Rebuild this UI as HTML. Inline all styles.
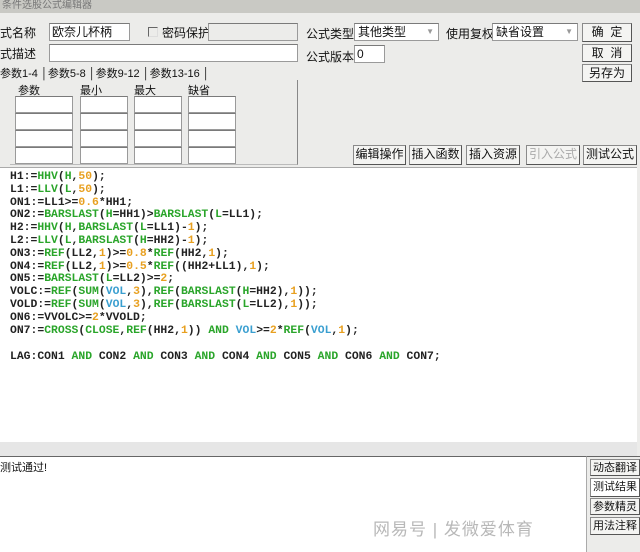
<!DOCTYPE html>
<html><head><meta charset="utf-8"><style>
*{margin:0;padding:0;box-sizing:border-box}
body{width:640px;height:552px;overflow:hidden;background:#ececea;font-family:"Liberation Sans","Noto Sans CJK SC",sans-serif;font-size:12px;color:#111;position:relative}
.a{position:absolute;white-space:nowrap}
.in{position:absolute;background:#fff;border:1px solid #9a9a9a;border-top-color:#7a7a7a}
.btn{position:absolute;background:#f4f4f2;border:1px solid #8a8a8a;border-right-color:#555;border-bottom-color:#555;text-align:center;font-size:12px;line-height:17px}
.code{position:absolute;left:10px;top:171px;font-family:"Liberation Mono",monospace;font-weight:bold;font-size:11.4px;color:#222;white-space:pre}
.code div{height:12.8px;line-height:12.8px}
.g{color:#2aa52a}.o{color:#e8a020}.b{color:#3a9fd0}
</style></head><body>
<div class="a" style="left:0;top:0;width:640px;height:13px;background:#c9c9c4"></div>
<div class="a" style="left:2px;top:0;font-size:10px;color:#777;line-height:11px">条件选股公式编辑器</div>

<div class="a" style="left:0;top:24px">式名称</div>
<div class="in" style="left:49px;top:23px;width:81px;height:18px;padding-left:2px;line-height:16px">欧奈儿杯柄</div>
<div class="a" style="left:148px;top:27px;width:10px;height:10px;border:1px solid #666;border-right-color:#ddd;border-bottom-color:#ddd"></div>
<div class="a" style="left:162px;top:24px">密码保护</div>
<div class="in" style="left:208px;top:23px;width:90px;height:18px;background:#ececea"></div>
<div class="a" style="left:0;top:45px">式描述</div>
<div class="in" style="left:49px;top:44px;width:249px;height:18px"></div>

<div class="a" style="left:0;top:65px;font-size:11px">参数1-4 │参数5-8 │参数9-12 │参数13-16 │</div>
<div class="a" style="left:10px;top:80px;width:288px;height:85px;border-right:1px solid #888;border-bottom:1px solid #bbb"></div>
<div class="a" style="left:18px;top:82px;font-size:11px">参数</div>
<div class="a" style="left:80px;top:82px;font-size:11px">最小</div>
<div class="a" style="left:134px;top:82px;font-size:11px">最大</div>
<div class="a" style="left:188px;top:82px;font-size:11px">缺省</div>
<div class="in" style="left:15px;top:96px;width:58px;height:17px"></div><div class="in" style="left:80px;top:96px;width:48px;height:17px"></div><div class="in" style="left:134px;top:96px;width:48px;height:17px"></div><div class="in" style="left:188px;top:96px;width:48px;height:17px"></div>
<div class="in" style="left:15px;top:113px;width:58px;height:17px"></div><div class="in" style="left:80px;top:113px;width:48px;height:17px"></div><div class="in" style="left:134px;top:113px;width:48px;height:17px"></div><div class="in" style="left:188px;top:113px;width:48px;height:17px"></div>
<div class="in" style="left:15px;top:130px;width:58px;height:17px"></div><div class="in" style="left:80px;top:130px;width:48px;height:17px"></div><div class="in" style="left:134px;top:130px;width:48px;height:17px"></div><div class="in" style="left:188px;top:130px;width:48px;height:17px"></div>
<div class="in" style="left:15px;top:147px;width:58px;height:17px"></div><div class="in" style="left:80px;top:147px;width:48px;height:17px"></div><div class="in" style="left:134px;top:147px;width:48px;height:17px"></div><div class="in" style="left:188px;top:147px;width:48px;height:17px"></div>

<div class="a" style="left:306px;top:25px">公式类型</div>
<div class="in" style="left:354px;top:23px;width:85px;height:18px;padding-left:3px;line-height:16px">其他类型<span style="position:absolute;right:4px;color:#999;font-size:8px">▼</span></div>
<div class="a" style="left:446px;top:25px">使用复权</div>
<div class="in" style="left:492px;top:23px;width:86px;height:18px;padding-left:3px;line-height:16px">缺省设置<span style="position:absolute;right:4px;color:#999;font-size:8px">▼</span></div>
<div class="a" style="left:306px;top:48px">公式版本</div>
<div class="in" style="left:354px;top:45px;width:31px;height:18px;padding-left:2px;line-height:16px">0</div>
<div class="btn" style="left:582px;top:23px;width:50px;height:19px">确&nbsp;&nbsp;定</div>
<div class="btn" style="left:582px;top:44px;width:50px;height:18px">取&nbsp;&nbsp;消</div>
<div class="btn" style="left:582px;top:64px;width:50px;height:18px">另存为</div>

<div class="btn" style="left:353px;top:145px;width:53px;height:20px">编辑操作</div>
<div class="btn" style="left:409px;top:145px;width:53px;height:20px">插入函数</div>
<div class="btn" style="left:466px;top:145px;width:54px;height:20px">插入资源</div>
<div class="btn" style="left:526px;top:145px;width:54px;height:20px;color:#aaa">引入公式</div>
<div class="btn" style="left:583px;top:145px;width:54px;height:20px">测试公式</div>

<div class="a" style="left:0;top:167px;width:637px;height:275px;background:#fff;border-top:1px solid #aaa"></div>
<div class="code"><div>H1:=<span class="g">HHV</span>(<span class="g">H</span>,<span class="o">50</span>);</div><div>L1:=<span class="g">LLV</span>(<span class="g">L</span>,<span class="o">50</span>);</div><div>ON1:=LL1&gt;=<span class="o">0.6</span>*HH1;</div><div>ON2:=<span class="g">BARSLAST</span>(<span class="g">H</span>=HH1)&gt;<span class="g">BARSLAST</span>(<span class="g">L</span>=LL1);</div><div>H2:=<span class="g">HHV</span>(<span class="g">H</span>,<span class="g">BARSLAST</span>(<span class="g">L</span>=LL1)-<span class="o">1</span>);</div><div>L2:=<span class="g">LLV</span>(<span class="g">L</span>,<span class="g">BARSLAST</span>(<span class="g">H</span>=HH2)-<span class="o">1</span>);</div><div>ON3:=<span class="g">REF</span>(LL2,<span class="o">1</span>)&gt;=<span class="o">0.8</span>*<span class="g">REF</span>(HH2,<span class="o">1</span>);</div><div>ON4:=<span class="g">REF</span>(LL2,<span class="o">1</span>)&gt;=<span class="o">0.5</span>*<span class="g">REF</span>((HH2+LL1),<span class="o">1</span>);</div><div>ON5:=<span class="g">BARSLAST</span>(<span class="g">L</span>=LL2)&gt;=<span class="o">2</span>;</div><div>VOLC:=<span class="g">REF</span>(<span class="g">SUM</span>(<span class="b">VOL</span>,<span class="o">3</span>),<span class="g">REF</span>(<span class="g">BARSLAST</span>(<span class="g">H</span>=HH2),<span class="o">1</span>));</div><div>VOLD:=<span class="g">REF</span>(<span class="g">SUM</span>(<span class="b">VOL</span>,<span class="o">3</span>),<span class="g">REF</span>(<span class="g">BARSLAST</span>(<span class="g">L</span>=LL2),<span class="o">1</span>));</div><div>ON6:=VVOLC&gt;=<span class="o">2</span>*VVOLD;</div><div>ON7:=<span class="g">CROSS</span>(<span class="g">CLOSE</span>,<span class="g">REF</span>(HH2,<span class="o">1</span>)) <span class="g">AND</span> <span class="b">VOL</span>&gt;=<span class="o">2</span>*<span class="g">REF</span>(<span class="b">VOL</span>,<span class="o">1</span>);</div><div style="height:14px"></div><div>LAG:CON1 <span class="g">AND</span> CON2 <span class="g">AND</span> CON3 <span class="g">AND</span> CON4 <span class="g">AND</span> CON5 <span class="g">AND</span> CON6 <span class="g">AND</span> CON7;</div></div>

<div class="a" style="left:0;top:442px;width:637px;height:14px;background:#e6e6e6"></div>
<div class="a" style="left:0;top:456px;width:587px;height:96px;background:#fff;border-top:1px solid #666;border-right:1px solid #aaa"></div>
<div class="a" style="left:0;top:459px;font-size:11px">测试通过!</div>
<div class="a" style="left:587px;top:456px;width:53px;height:96px;background:#ececea;border-top:1px solid #666"></div>
<div class="btn" style="left:590px;top:459px;width:50px;height:17px;font-size:11px;text-align:left;padding-left:2px">动态翻译</div>
<div class="btn" style="left:590px;top:478px;width:50px;height:19px;font-size:11px;text-align:left;padding-left:2px;background:#fff">测试结果</div>
<div class="btn" style="left:590px;top:498px;width:50px;height:17px;font-size:11px;text-align:left;padding-left:2px">参数精灵</div>
<div class="btn" style="left:590px;top:517px;width:50px;height:18px;font-size:11px;text-align:left;padding-left:2px">用法注释</div>
<div class="a" style="left:373px;top:515px;font-size:17px;color:#b8b8b8;letter-spacing:1px">网易号 | 发微爱体育</div>
</body></html>
